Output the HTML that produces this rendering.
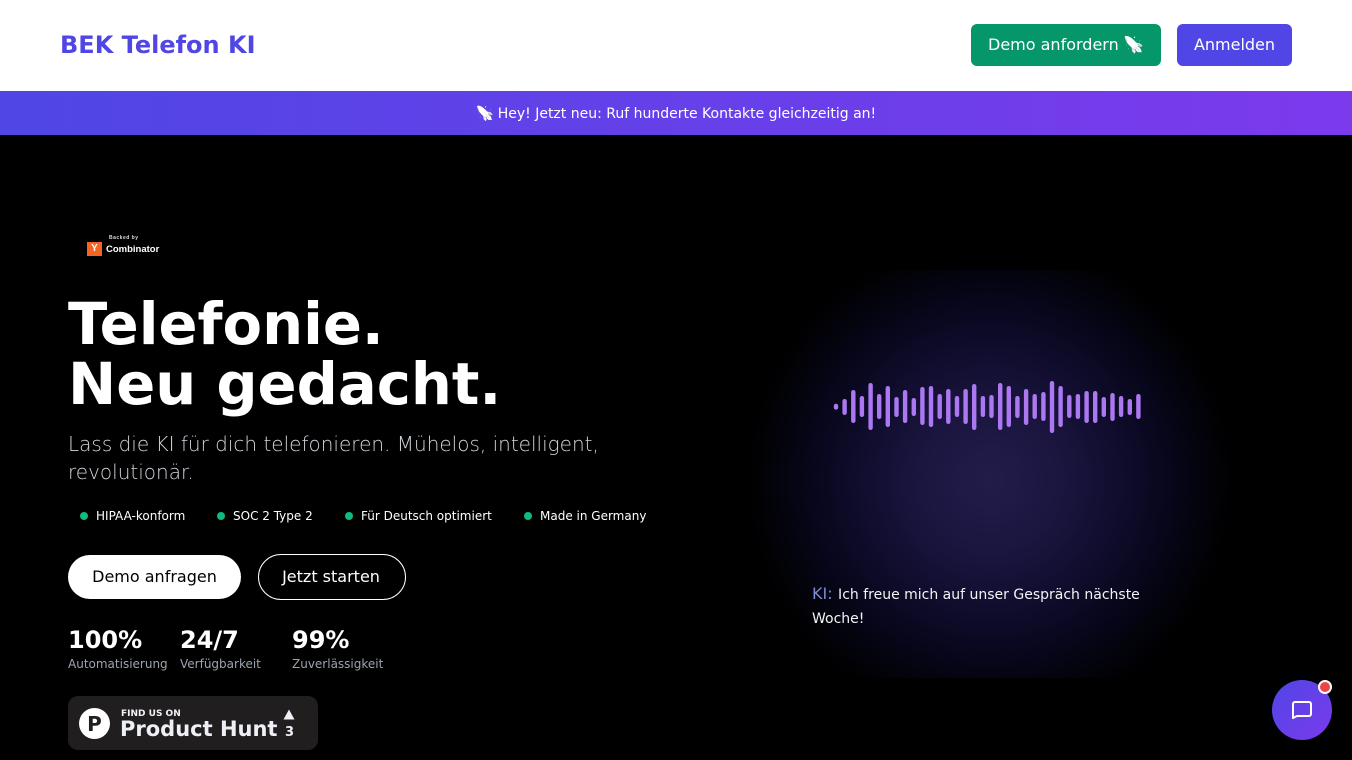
<!DOCTYPE html>
<html lang="de"><head><meta charset="utf-8"><title>BEK Telefon KI</title>
<style>
*{box-sizing:border-box;margin:0;padding:0}
html,body{width:1352px;height:760px;overflow:hidden;background:#000;font-family:"DejaVu Sans","Liberation Sans",sans-serif;color:#fff}
.a{position:absolute;white-space:nowrap}
.btn{display:flex;align-items:center;justify-content:center;border-radius:6px;font-size:16px;color:#fff;padding-bottom:2px}
.dot{width:8px;height:8px;border-radius:50%;background:#10b981;top:512px}
.chip{font-size:12px;line-height:16px;top:508px;color:#fff}
.num{font-size:24px;font-weight:700;line-height:32px;top:624px}
.lbl{font-size:12px;line-height:16px;top:656px;color:#9ca3af}
.rk{display:inline-block;transform:scaleX(-1);filter:grayscale(1) brightness(3.2)}
</style></head><body>
<div class="a" style="left:0;top:0;width:1352px;height:91px;background:#fff"></div>
<div class="a" style="left:60px;top:29px;font-size:24px;line-height:32px;font-weight:700;color:#4f46e5">BEK Telefon KI</div>
<div class="a btn" style="left:971px;top:24px;width:190px;height:42px;background:#059669"></div>
<div class="a" style="left:988px;top:34px;font-size:16px;line-height:22px;color:#fff">Demo anfordern <span class="rk">🚀</span></div>
<div class="a btn" style="left:1177px;top:24px;width:115px;height:42px;background:#4f46e5">Anmelden</div>
<div class="a" style="left:0;top:91px;width:1352px;height:44px;background:linear-gradient(90deg,#4f46e5,#7c3aed)"></div>
<div class="a" style="left:0;width:1352px;text-align:center;top:104px;font-size:14px;line-height:20px;color:#fff"><span class="rk">🚀</span> Hey! Jetzt neu: Ruf hunderte Kontakte gleichzeitig an!</div>

<div class="a" style="left:109px;top:235px;font:700 5px/7px 'Liberation Sans',sans-serif;letter-spacing:.5px;color:#ddd">Backed by</div>
<div class="a" style="left:87px;top:242px;width:15px;height:14px;background:#f26522;color:#fff;font:700 10px/14px 'Liberation Sans',sans-serif;text-align:center">Y</div>
<div class="a" style="left:106px;top:243px;font:700 9.500px/14px 'Liberation Sans',sans-serif;color:#fff">Combinator</div>

<div class="a" style="left:68px;top:295px;font-size:57.600px;line-height:60px;font-weight:700">Telefonie.<br>Neu gedacht.</div>
<div class="a" style="left:68px;top:430px;width:560px;white-space:normal;font-size:20px;line-height:28px;font-weight:200;color:#d1d5db">Lass die KI für dich telefonieren. Mühelos, intelligent, revolutionär.</div>

<div class="a dot" style="left:80px"></div><div class="a chip" style="left:96px">HIPAA-konform</div>
<div class="a dot" style="left:217px"></div><div class="a chip" style="left:233px">SOC 2 Type 2</div>
<div class="a dot" style="left:345px"></div><div class="a chip" style="left:361px">Für Deutsch optimiert</div>
<div class="a dot" style="left:524px"></div><div class="a chip" style="left:540px">Made in Germany</div>

<div class="a btn" style="left:68px;top:555px;width:173px;height:44px;border-radius:22px;background:#fff;color:#000">Demo anfragen</div>
<div class="a btn" style="left:258px;top:554px;width:148px;height:46px;border-radius:23px;border:1px solid #fff;padding-right:2px">Jetzt starten</div>

<div class="a num" style="left:68px">100%</div><div class="a lbl" style="left:68px">Automatisierung</div>
<div class="a num" style="left:180px">24/7</div><div class="a lbl" style="left:180px">Verfügbarkeit</div>
<div class="a num" style="left:292px">99%</div><div class="a lbl" style="left:292px">Zuverlässigkeit</div>

<div class="a" style="left:68px;top:696px;width:250px;height:54px;border-radius:10px;background:#211e20"></div>
<div class="a" style="left:79px;top:708px;width:31px;height:31px;border-radius:50%;background:#fff;color:#211e20;font-size:20px;font-weight:700;line-height:33px;text-align:center">P</div>
<div class="a" style="left:121px;top:708px;font-size:9px;line-height:12px;font-weight:700;color:#f1f3f8">FIND US ON</div>
<div class="a" style="left:120px;top:716px;font-size:21px;line-height:27px;font-weight:700;color:#eef0f6">Product Hunt</div>
<svg class="a" style="left:283px;top:709px" width="12" height="11" viewBox="0 0 12 11"><path d="M6 .5 11.500 10.500H.5Z" fill="#eef0f6"/></svg>
<div class="a" style="left:285px;top:725px;font-size:13px;line-height:16px;font-weight:700;color:#eef0f6">3</div>

<div class="a" style="left:740px;top:270px;width:500px;height:408px;background:radial-gradient(circle 245px at 250px 210px,#221c4a 0%,#1b1640 28%,#100d2e 52%,#07061a 74%,#020207 92%,#000 100%)"></div>
<svg class="a" style="left:0;top:0" width="1352" height="760" fill="#ab78f2">
<rect x="833.800" y="403.700" width="4.400" height="6" rx="2.200"/>
<rect x="842.400" y="399" width="4.400" height="16" rx="2.200"/>
<rect x="851.100" y="390" width="4.400" height="33" rx="2.200"/>
<rect x="859.700" y="396" width="4.400" height="21" rx="2.200"/>
<rect x="868.400" y="383" width="4.400" height="47" rx="2.200"/>
<rect x="877" y="394" width="4.400" height="25" rx="2.200"/>
<rect x="885.600" y="386" width="4.400" height="41" rx="2.200"/>
<rect x="894.300" y="397" width="4.400" height="20" rx="2.200"/>
<rect x="902.900" y="390" width="4.400" height="33" rx="2.200"/>
<rect x="911.600" y="398" width="4.400" height="18" rx="2.200"/>
<rect x="920.200" y="387" width="4.400" height="38" rx="2.200"/>
<rect x="928.800" y="386" width="4.400" height="41" rx="2.200"/>
<rect x="937.500" y="394" width="4.400" height="25" rx="2.200"/>
<rect x="946.100" y="389" width="4.400" height="35" rx="2.200"/>
<rect x="954.800" y="396" width="4.400" height="21" rx="2.200"/>
<rect x="963.400" y="389" width="4.400" height="35" rx="2.200"/>
<rect x="972" y="384" width="4.400" height="46" rx="2.200"/>
<rect x="980.700" y="396" width="4.400" height="21" rx="2.200"/>
<rect x="989.300" y="395" width="4.400" height="23" rx="2.200"/>
<rect x="998" y="383" width="4.400" height="47" rx="2.200"/>
<rect x="1006.600" y="386" width="4.400" height="41" rx="2.200"/>
<rect x="1015.200" y="396" width="4.400" height="22" rx="2.200"/>
<rect x="1023.900" y="389" width="4.400" height="36" rx="2.200"/>
<rect x="1032.500" y="394" width="4.400" height="25" rx="2.200"/>
<rect x="1041.200" y="392" width="4.400" height="29" rx="2.200"/>
<rect x="1049.800" y="381" width="4.400" height="52" rx="2.200"/>
<rect x="1058.400" y="386" width="4.400" height="41" rx="2.200"/>
<rect x="1067.100" y="395" width="4.400" height="23" rx="2.200"/>
<rect x="1075.700" y="394" width="4.400" height="25" rx="2.200"/>
<rect x="1084.400" y="391" width="4.400" height="32" rx="2.200"/>
<rect x="1093" y="391" width="4.400" height="32" rx="2.200"/>
<rect x="1101.600" y="397" width="4.400" height="20" rx="2.200"/>
<rect x="1110.300" y="393" width="4.400" height="28" rx="2.200"/>
<rect x="1118.900" y="396" width="4.400" height="21" rx="2.200"/>
<rect x="1127.600" y="399" width="4.400" height="16" rx="2.200"/>
<rect x="1136.200" y="394" width="4.400" height="25" rx="2.200"/>
</svg>
<div class="a" style="left:812px;top:582px;width:340px;white-space:normal;font-size:14px;line-height:24px;color:#f3f4f6"><span style="color:#7f8ad8;font-size:16px;margin-right:1px">KI:</span> Ich freue mich auf unser Gespräch nächste Woche!</div>

<div class="a" style="left:1272px;top:680px;width:60px;height:60px;border-radius:50%;background:linear-gradient(135deg,#4f46e5,#7c3aed)"></div>
<svg class="a" style="left:1290px;top:698px" width="24" height="24" viewBox="0 0 24 24" fill="none" stroke="#fff" stroke-width="2" stroke-linejoin="round"><path d="M3 20V6a2 2 0 0 1 2-2h14a2 2 0 0 1 2 2v10a2 2 0 0 1-2 2H7Z"/></svg>
<div class="a" style="left:1318px;top:680px;width:14px;height:14px;border-radius:50%;background:#ef4444;border:2px solid #fff"></div>
</body></html>
